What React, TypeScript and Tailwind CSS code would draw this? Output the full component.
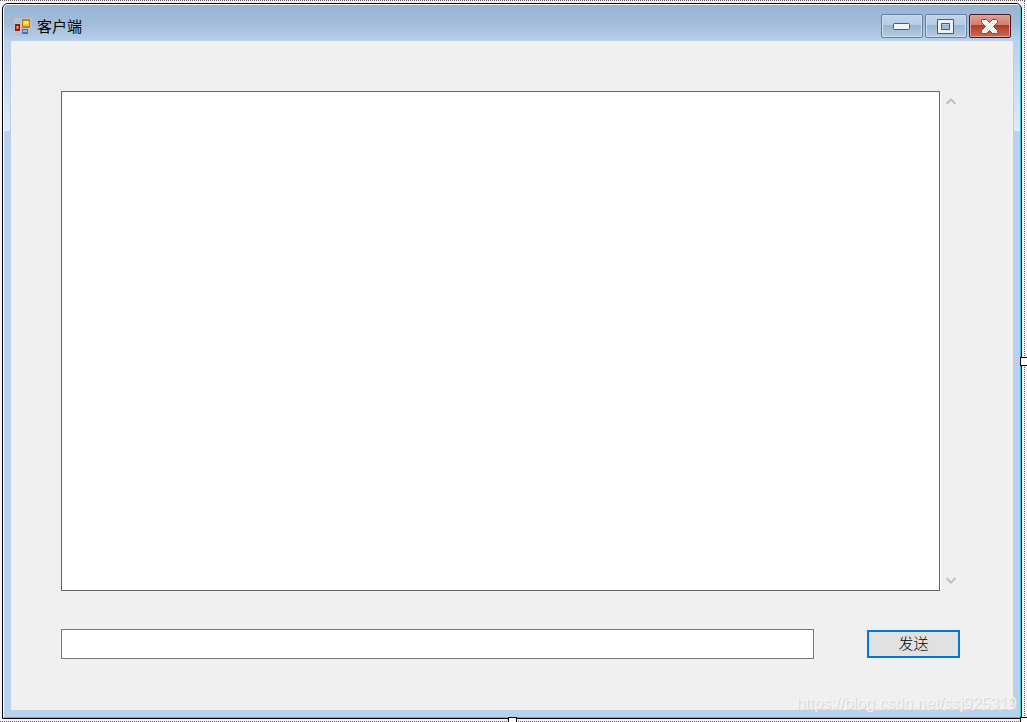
import React from 'react';

function FormIcon() {
  return (
    <svg width="18" height="18" viewBox="0 0 18 18" shapeRendering="crispEdges" aria-hidden="true">
      <rect width="18" height="18" fill="#c2c2c4" />
      <path d="M1 1h6v4H1zM1 14h6v3H1zM15 11h2v6h-2z" fill="#adc3da" />
      <rect x="1" y="6" width="5" height="7" fill="#a51208" />
      <rect x="2" y="8" width="3" height="3" fill="#e2573f" />
      <rect x="3" y="8" width="1" height="2" fill="#f8b09a" />
      <rect x="8" y="1" width="8" height="9" fill="#b98211" />
      <rect x="9" y="3" width="6" height="5" fill="#fbc52e" />
      <rect x="10" y="3" width="4" height="3" fill="#ffe98a" />
      <rect x="8" y="11" width="6" height="5" fill="#3b74d0" />
      <rect x="9" y="12" width="4" height="2" fill="#8fb9f5" />
    </svg>
  );
}

function TitleBar() {
  const blue =
    'flex h-6 w-[42px] items-center justify-center rounded-[2px] border border-[#667e9f] bg-[linear-gradient(#c0d4e9_0%,#b7cde4_45%,#98b4cf_46%,#b4cde6_100%)] pr-px pt-px shadow-[inset_0_0_0_1px_#cbdcee]';

  return (
    <header className="flex h-9 shrink-0 justify-between bg-[linear-gradient(#99b4d1,#a3bdd9_55%,#b9d1ea)] pr-[9px] pl-[10px]">
      <div className="flex items-center gap-[5px] pt-2">
        <FormIcon />
        <h1 className="text-[15px] leading-5 text-black">客户端</h1>
      </div>
      <div className="flex gap-0.5 pt-[9px]">
        <button type="button" aria-label="最小化" className={blue}>
          <svg width="17" height="7" viewBox="0 0 17 7">
            <rect x="0.5" y="0.5" width="16" height="6" rx="1" fill="#f3f3f3" stroke="#535666" />
          </svg>
        </button>
        <button type="button" aria-label="最大化" className={blue}>
          <svg width="17" height="15" viewBox="0 0 17 15">
            <path
              d="M.5.5h16v14H.5zM4.500 4.500v6h8v-6z"
              fill="#f0f0f0"
              stroke="#535666"
              fillRule="evenodd"
            />
          </svg>
        </button>
        <button
          type="button"
          aria-label="关闭"
          className="flex h-6 w-[42px] items-center justify-center rounded-[2px] border border-[#4b1420] bg-[linear-gradient(#e0a094_0%,#d27f6f_45%,#b53823_46%,#cb6a55_100%)] pt-px pr-px shadow-[inset_0_0_0_1px_#e3a397]"
        >
          <svg width="17" height="15" viewBox="0 0 17 15">
            <path
              d="M1.500 .5h4l3 3 3-3h4l1 1v2l-4 4 4 4v2l-1 1h-4l-3-3-3 3h-4l-1-1v-2l4-4-4-4v-2z"
              fill="#f1f1f1"
              stroke="#535666"
            />
          </svg>
        </button>
      </div>
    </header>
  );
}

function Chevron({ up = false }: { up?: boolean }) {
  return (
    <svg width="10" height="7" viewBox="0 0 10 7" aria-hidden="true">
      <path d={up ? 'M.5 6L5 1.500L9.500 6' : 'M.5 1L5 5.500L9.500 1'} fill="none" stroke="#bfbfbf" strokeWidth="2" />
    </svg>
  );
}

function ChatForm() {
  return (
    <form
      className="flex min-w-0 flex-1 flex-col bg-[#f0f0f0] pt-[50px] pr-[53px] pb-[51px] pl-[50px]"
      onSubmit={(e) => e.preventDefault()}
    >
      <div className="flex flex-1">
        <textarea
          aria-label="聊天记录"
          readOnly
          className="flex-1 resize-none border border-[#646464] bg-white p-1 text-[15px] outline-none"
        />
        <div className="flex w-5 flex-col items-center justify-between border-l border-white py-[7px]">
          <Chevron up />
          <Chevron />
        </div>
      </div>
      <div className="mt-[38px] flex items-center gap-[53px]">
        <input
          type="text"
          aria-label="消息"
          className="h-[30px] min-w-0 flex-1 border border-[#7a7a7a] bg-white px-1 text-[15px] outline-none"
        />
        <button
          type="submit"
          className="h-7 w-[93px] border-2 border-[#0078d7] bg-[#e1e1e1] text-[15px] leading-5 font-light text-black"
        >
          发送
        </button>
      </div>
    </form>
  );
}

function App() {
  return (
    <div className="relative flex h-screen overflow-hidden bg-[#f7f5f7] pr-0.5 font-['Liberation_Sans','Noto_Sans_CJK_SC',sans-serif]">
      <div className="flex flex-1 border-y border-r border-dotted border-[#5c5660] p-0.5">
        <main className="flex flex-1 flex-col overflow-hidden rounded-t-[6px] border border-black bg-[#b9d1ea]">
          <div className="flex flex-1 flex-col overflow-hidden rounded-t-[5px] border border-t-white border-r-[#35c5de] border-b-[#35c5de] border-l-white">
            <TitleBar />
            <div className="flex flex-1">
              <div className="w-[7px] pr-px">
                <div className="h-[90px] bg-linear-to-b from-[#b9d1ea] to-[#dfeaf7]" />
              </div>
              <ChatForm />
              <div className="w-[7px] pl-px">
                <div className="h-[90px] bg-linear-to-b from-[#b9d1ea] to-[#dfeaf7]" />
              </div>
            </div>
            <div className="h-[7px] shrink-0" />
          </div>
        </main>
      </div>

      {/* resize handles */}
      <span className="absolute top-1/2 right-0 -mt-1 h-[9px] w-[7px] border-y border-l border-black bg-white" />
      <span className="absolute bottom-0 left-1/2 -ml-1.5 h-[5px] w-[9px] border-x border-t border-black bg-white" />
      <span className="absolute right-0 bottom-0 h-[5px] w-[7px] border-t border-l border-black bg-white" />

      <p className="absolute right-2.5 bottom-2 text-base leading-5 text-[#f8f8f8]/80 [text-shadow:1px_1px_1px_#cfcfcf]">
        https://blog.csdn.net/ssj925319
      </p>
    </div>
  );
}

export default App;
